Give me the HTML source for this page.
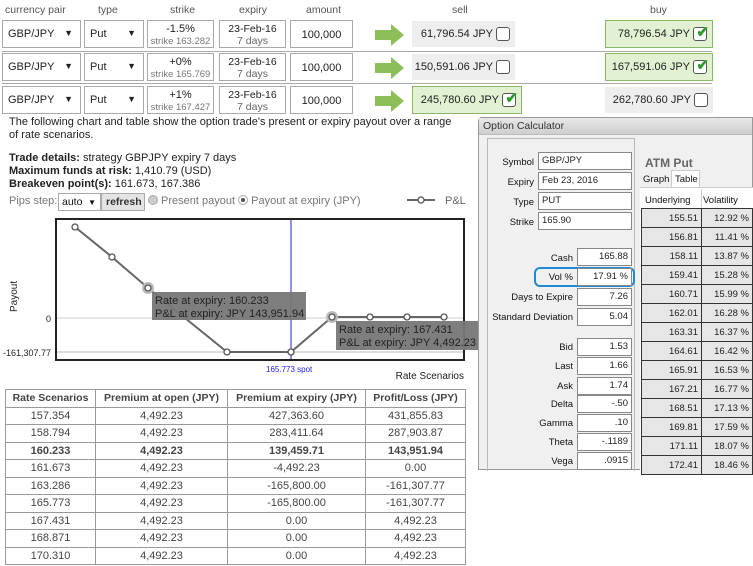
<!DOCTYPE html><html><head><meta charset="utf-8"><style>
*{box-sizing:border-box;margin:0;padding:0}
body{width:753px;height:566px;overflow:hidden;background:#fff;font-family:"Liberation Sans",Arial,sans-serif;font-size:11px;color:#222;position:relative}
.a{position:absolute;white-space:nowrap}
.h{color:#555;font-size:10.5px}
.box{position:absolute;border:1px solid #aaa;background:#fff;white-space:nowrap}
.dd{font-size:11px;padding:7px 0 0 5px}
.dd b{position:absolute;right:7px;top:7px;font-size:9px}
.c{text-align:center;line-height:12px}
.sell{position:absolute;background:#eee;text-align:right;padding:7px 22px 0 0;font-size:11px;white-space:nowrap}
.g{background:#e2f1d2;border:1px solid #8ab86a}
.cb{position:absolute;right:5px;top:6px;width:14px;height:14px;border:1px solid #555;border-radius:3px;background:#fff}
.ck{position:absolute;right:3px;top:4px;font-size:15px;color:#2e9a2e;font-weight:bold;line-height:15px}
.sep{position:absolute;left:2px;width:710px;height:1px;background:#aaa}
table.t{position:absolute;left:5px;top:389px;width:460px;border-collapse:collapse;font-size:11px;color:#444;table-layout:fixed}
table.t td,table.t th{border:1px solid #999;text-align:center;height:17.5px;padding:0;white-space:nowrap;overflow:hidden}
table.t th{font-size:10.5px;color:#444}
.pn{position:absolute;left:478px;top:117px;width:275px;height:353px;background:#f0f0f0;border:1px solid #999;border-radius:4px 0 0 0}
.tb{position:absolute;left:0;top:0;width:100%;height:17px;background:linear-gradient(#e8e8e8,#cfcfcf);font-size:10.5px;padding:2px 4px;color:#333;border-bottom:1px solid #bbb}
.lbl{position:absolute;font-size:9.5px;text-align:right;color:#111;white-space:nowrap}
.in{position:absolute;background:#fff;border:1px solid #888;font-size:9.5px;padding:2px 3px;height:18px;white-space:nowrap}
.r{text-align:right}
.cell{position:absolute;height:20px;background:#e6e6e6;border:1px solid #333;font-size:9.5px;text-align:right;padding:4px 3px 0 0}
</style></head><body>
<div class="a h" style="left:5px;top:4px">currency pair</div>
<div class="a h" style="left:98px;top:4px">type</div>
<div class="a h" style="left:170px;top:4px">strike</div>
<div class="a h" style="left:239px;top:4px">expiry</div>
<div class="a h" style="left:306px;top:4px">amount</div>
<div class="a h" style="left:452px;top:4px">sell</div>
<div class="a h" style="left:650px;top:4px">buy</div>

<div class="box dd" style="left:2px;top:20px;width:79px;height:28px">GBP/JPY<b>▼</b></div>
<div class="box dd" style="left:84px;top:20px;width:60px;height:28px">Put<b>▼</b></div>
<div class="box c" style="left:147px;top:20px;width:67px;height:28px;padding-top:2px">-1.5%<br><span style="font-size:9.5px;color:#777">strike 163.282</span></div>
<div class="box c" style="left:219px;top:20px;width:67px;height:28px;padding-top:2px;font-size:10.5px">23-Feb-16<br><span style="color:#666">7 days</span></div>
<div class="box c" style="left:290px;top:20px;width:63px;height:28px;padding-top:8px">100,000</div>
<svg class="a" style="left:375px;top:24px" width="30" height="22"><path d="M0 6H16V0L29 11L16 22V16H0Z" fill="#8cbf5a"/></svg>
<div class="sell" style="left:412px;top:21px;width:103px;height:26px">61,796.54 JPY<div class="cb"></div></div>
<div class="sell g" style="left:605px;top:20px;width:108px;height:28px">78,796.54 JPY<div class="cb"></div><div class="ck">✔</div></div>
<div class="sep" style="top:51px"></div>

<div class="box dd" style="left:2px;top:53px;width:79px;height:28px">GBP/JPY<b>▼</b></div>
<div class="box dd" style="left:84px;top:53px;width:60px;height:28px">Put<b>▼</b></div>
<div class="box c" style="left:147px;top:53px;width:67px;height:28px;padding-top:2px">+0%<br><span style="font-size:9.5px;color:#777">strike 165.769</span></div>
<div class="box c" style="left:219px;top:53px;width:67px;height:28px;padding-top:2px;font-size:10.5px">23-Feb-16<br><span style="color:#666">7 days</span></div>
<div class="box c" style="left:290px;top:53px;width:63px;height:28px;padding-top:8px">100,000</div>
<svg class="a" style="left:375px;top:57px" width="30" height="22"><path d="M0 6H16V0L29 11L16 22V16H0Z" fill="#8cbf5a"/></svg>
<div class="sell" style="left:412px;top:54px;width:103px;height:26px">150,591.06 JPY<div class="cb"></div></div>
<div class="sell g" style="left:605px;top:53px;width:108px;height:28px">167,591.06 JPY<div class="cb"></div><div class="ck">✔</div></div>
<div class="sep" style="top:83px"></div>

<div class="box dd" style="left:2px;top:86px;width:79px;height:28px">GBP/JPY<b>▼</b></div>
<div class="box dd" style="left:84px;top:86px;width:60px;height:28px">Put<b>▼</b></div>
<div class="box c" style="left:147px;top:86px;width:67px;height:28px;padding-top:2px">+1%<br><span style="font-size:9.5px;color:#777">strike 167.427</span></div>
<div class="box c" style="left:219px;top:86px;width:67px;height:28px;padding-top:2px;font-size:10.5px">23-Feb-16<br><span style="color:#666">7 days</span></div>
<div class="box c" style="left:290px;top:86px;width:63px;height:28px;padding-top:8px">100,000</div>
<svg class="a" style="left:375px;top:90px" width="30" height="22"><path d="M0 6H16V0L29 11L16 22V16H0Z" fill="#8cbf5a"/></svg>
<div class="sell g" style="left:412px;top:86px;width:110px;height:28px">245,780.60 JPY<div class="cb"></div><div class="ck">✔</div></div>
<div class="sell" style="left:605px;top:87px;width:108px;height:26px">262,780.60 JPY<div class="cb"></div></div>

<div class="a" style="left:9px;top:116px;line-height:13px;font-size:11px">The following chart and table show the option trade's present or expiry payout over a range<br>of rate scenarios.</div>
<div class="a" style="left:9px;top:152px;line-height:13px;font-size:11px"><b>Trade details:</b> strategy GBPJPY expiry 7 days<br><b>Maximum funds at risk:</b> 1,410.79 (USD)<br><b>Breakeven point(s):</b> 161.673, 167.386</div>
<div class="a" style="left:9px;top:195px;color:#777">Pips step:</div>
<div class="box" style="left:58px;top:193px;width:43px;height:18px;font-size:10.5px;padding:2px 3px;color:#111">auto <span style="position:absolute;right:4px;font-size:8px;top:4px">▼</span></div>
<div class="box" style="left:101px;top:193px;width:44px;height:18px;background:#e4e4e4;font-size:10.5px;padding:2px 4px;font-weight:bold;color:#333">refresh</div>
<div class="a" style="left:148px;top:195px;color:#777;font-size:11px"><span style="display:inline-block;width:10px;height:10px;border-radius:50%;background:#ccc;border:1px solid #aaa;vertical-align:-1px"></span> Present payout <span style="display:inline-block;width:10px;height:10px;border-radius:50%;background:#fff;border:1px solid #aaa;vertical-align:-1px;position:relative"><span style="position:absolute;left:2px;top:2px;width:4px;height:4px;border-radius:50%;background:#555"></span></span> Payout at expiry (JPY)</div>
<svg class="a" style="left:405px;top:193px" width="70" height="14"><line x1="2" y1="7" x2="30" y2="7" stroke="#666" stroke-width="2"/><circle cx="16" cy="7" r="3" fill="#fff" stroke="#666" stroke-width="1.5"/><text x="40" y="11" font-size="11" fill="#666" font-family="Liberation Sans">P&amp;L</text></svg>

<svg class="a" style="left:0;top:210px" width="480" height="175" font-family="Liberation Sans">
<rect x="56" y="9" width="408" height="141" fill="#fff" stroke="#222" stroke-width="2"/>
<line x1="57" y1="108" x2="463" y2="108" stroke="#ccc"/>
<line x1="57" y1="142" x2="463" y2="142" stroke="#ddd" stroke-width="2"/>
<line x1="291" y1="10" x2="291" y2="149" stroke="#2222ee"/>
<polyline points="75,17 112,47 148,78 185,108 227,142 291,142 332,107 370,107 407,107 444,107" fill="none" stroke="#666" stroke-width="2"/>
<circle cx="148" cy="78" r="6" fill="#bbb"/><circle cx="332" cy="107" r="6" fill="#bbb"/>
<g fill="#fff" stroke="#555" stroke-width="1.3"><circle cx="75" cy="17" r="3"/><circle cx="112" cy="47" r="3"/><circle cx="148" cy="78" r="3"/><circle cx="227" cy="142" r="3"/><circle cx="291" cy="142" r="3"/><circle cx="332" cy="107" r="3"/><circle cx="370" cy="107" r="3"/><circle cx="407" cy="107" r="3"/><circle cx="444" cy="107" r="3"/></g>
<rect x="152" y="82" width="154" height="28" fill="#777" opacity=".95"/>
<text x="155" y="94" font-size="11" fill="#222">Rate at expiry: 160.233</text>
<text x="155" y="107" font-size="11" fill="#222">P&amp;L at expiry: JPY 143,951.94</text>
<rect x="336" y="111" width="144" height="29" fill="#777" opacity=".95"/>
<text x="339" y="123" font-size="11" fill="#222">Rate at expiry: 167.431</text>
<text x="339" y="136" font-size="11" fill="#222">P&amp;L at expiry: JPY 4,492.23</text>
<text x="17" y="102" font-size="10" fill="#222" transform="rotate(-90 17 102)">Payout</text>
<text x="51" y="112" font-size="9" fill="#222" text-anchor="end">0</text>
<text x="51" y="146" font-size="9" fill="#222" text-anchor="end">-161,307.77</text>
<text x="266" y="162" font-size="8" fill="#2222ee">165.773 spot</text>
<text x="464" y="169" font-size="10" fill="#222" text-anchor="end">Rate Scenarios</text>
</svg>

<table class="t">
<colgroup><col style="width:90px"><col style="width:132px"><col style="width:138px"><col style="width:100px"></colgroup>
<tr><th>Rate Scenarios</th><th>Premium at open (JPY)</th><th>Premium at expiry (JPY)</th><th>Profit/Loss (JPY)</th></tr>
<tr><td>157.354</td><td>4,492.23</td><td>427,363.60</td><td>431,855.83</td></tr>
<tr><td>158.794</td><td>4,492.23</td><td>283,411.64</td><td>287,903.87</td></tr>
<tr style="font-weight:bold"><td>160.233</td><td>4,492.23</td><td>139,459.71</td><td>143,951.94</td></tr>
<tr><td>161.673</td><td>4,492.23</td><td>-4,492.23</td><td>0.00</td></tr>
<tr><td>163.286</td><td>4,492.23</td><td>-165,800.00</td><td>-161,307.77</td></tr>
<tr><td>165.773</td><td>4,492.23</td><td>-165,800.00</td><td>-161,307.77</td></tr>
<tr><td>167.431</td><td>4,492.23</td><td>0.00</td><td>4,492.23</td></tr>
<tr><td>168.871</td><td>4,492.23</td><td>0.00</td><td>4,492.23</td></tr>
<tr><td>170.310</td><td>4,492.23</td><td>0.00</td><td>4,492.23</td></tr>
</table>

<div class="pn"><div class="tb">Option Calculator</div>
<div class="a" style="left:8px;top:20px;width:148px;height:333px;border:1px solid #bbb;border-bottom:none"></div>
</div>
<div class="lbl" style="left:490px;top:157px;width:44px">Symbol</div><div class="in" style="left:538px;top:152px;width:94px">GBP/JPY</div>
<div class="lbl" style="left:490px;top:177px;width:44px">Expiry</div><div class="in" style="left:538px;top:172px;width:94px">Feb 23, 2016</div>
<div class="lbl" style="left:490px;top:197px;width:44px">Type</div><div class="in" style="left:538px;top:192px;width:94px">PUT</div>
<div class="lbl" style="left:490px;top:217px;width:44px">Strike</div><div class="in" style="left:538px;top:212px;width:94px">165.90</div>
<div class="lbl" style="left:490px;top:253px;width:83px">Cash</div><div class="in r" style="left:577px;top:248px;width:55px">165.88</div>
<div class="a" style="left:534px;top:267px;width:101px;height:20px;border:2px solid #1e8ad8;border-radius:6px"></div>
<div class="lbl" style="left:490px;top:272px;width:83px">Vol %</div><div class="in r" style="left:577px;top:268px;width:55px">17.91 %</div>
<div class="lbl" style="left:480px;top:292px;width:93px">Days to Expire</div><div class="in r" style="left:577px;top:288px;width:55px">7.26</div>
<div class="lbl" style="left:480px;top:312px;width:93px">Standard Deviation</div><div class="in r" style="left:577px;top:308px;width:55px">5.04</div>
<div class="lbl" style="left:490px;top:342px;width:83px">Bid</div><div class="in r" style="left:577px;top:338px;width:55px">1.53</div>
<div class="lbl" style="left:490px;top:361px;width:83px">Last</div><div class="in r" style="left:577px;top:357px;width:55px">1.66</div>
<div class="lbl" style="left:490px;top:381px;width:83px">Ask</div><div class="in r" style="left:577px;top:377px;width:55px">1.74</div>
<div class="lbl" style="left:490px;top:399px;width:83px">Delta</div><div class="in r" style="left:577px;top:395px;width:55px">-.50</div>
<div class="lbl" style="left:490px;top:418px;width:83px">Gamma</div><div class="in r" style="left:577px;top:414px;width:55px">.10</div>
<div class="lbl" style="left:490px;top:437px;width:83px">Theta</div><div class="in r" style="left:577px;top:433px;width:55px">-.1189</div>
<div class="lbl" style="left:490px;top:456px;width:83px">Vega</div><div class="in r" style="left:577px;top:452px;width:55px">.0915</div>
<div class="a" style="left:645px;top:156px;font-size:12px;font-weight:bold;color:#666">ATM Put</div>
<div class="a" style="left:641px;top:171px;width:30px;height:16px;font-size:9.5px;padding:3px 2px;color:#111">Graph</div>
<div class="a" style="left:671px;top:170px;width:29px;height:18px;background:#fff;border:1px solid #ccc;border-bottom:none;font-size:9.5px;padding:3px 3px;color:#111">Table</div>
<div class="a" style="left:640px;top:187px;width:113px;height:283px;background:#fff;border-top:1px solid #ccc"></div>
<div class="a" style="left:645px;top:195px;font-size:9.5px;color:#111">Underlying</div>
<div class="a" style="left:703px;top:195px;font-size:9.5px;color:#111">Volatility</div>
<div class="a" style="left:701px;top:189px;width:1px;height:18px;background:#ccc"></div>
<div class="cell" style="left:641px;top:208px;width:61px">155.51</div><div class="cell" style="left:701px;top:208px;width:52px">12.92 %</div>
<div class="cell" style="left:641px;top:227px;width:61px">156.81</div><div class="cell" style="left:701px;top:227px;width:52px">11.41 %</div>
<div class="cell" style="left:641px;top:246px;width:61px">158.11</div><div class="cell" style="left:701px;top:246px;width:52px">13.87 %</div>
<div class="cell" style="left:641px;top:265px;width:61px">159.41</div><div class="cell" style="left:701px;top:265px;width:52px">15.28 %</div>
<div class="cell" style="left:641px;top:284px;width:61px">160.71</div><div class="cell" style="left:701px;top:284px;width:52px">15.99 %</div>
<div class="cell" style="left:641px;top:303px;width:61px">162.01</div><div class="cell" style="left:701px;top:303px;width:52px">16.28 %</div>
<div class="cell" style="left:641px;top:322px;width:61px">163.31</div><div class="cell" style="left:701px;top:322px;width:52px">16.37 %</div>
<div class="cell" style="left:641px;top:341px;width:61px">164.61</div><div class="cell" style="left:701px;top:341px;width:52px">16.42 %</div>
<div class="cell" style="left:641px;top:360px;width:61px">165.91</div><div class="cell" style="left:701px;top:360px;width:52px">16.53 %</div>
<div class="cell" style="left:641px;top:379px;width:61px">167.21</div><div class="cell" style="left:701px;top:379px;width:52px">16.77 %</div>
<div class="cell" style="left:641px;top:398px;width:61px">168.51</div><div class="cell" style="left:701px;top:398px;width:52px">17.13 %</div>
<div class="cell" style="left:641px;top:417px;width:61px">169.81</div><div class="cell" style="left:701px;top:417px;width:52px">17.59 %</div>
<div class="cell" style="left:641px;top:436px;width:61px">171.11</div><div class="cell" style="left:701px;top:436px;width:52px">18.07 %</div>
<div class="cell" style="left:641px;top:455px;width:61px">172.41</div><div class="cell" style="left:701px;top:455px;width:52px">18.46 %</div>
</body></html>
